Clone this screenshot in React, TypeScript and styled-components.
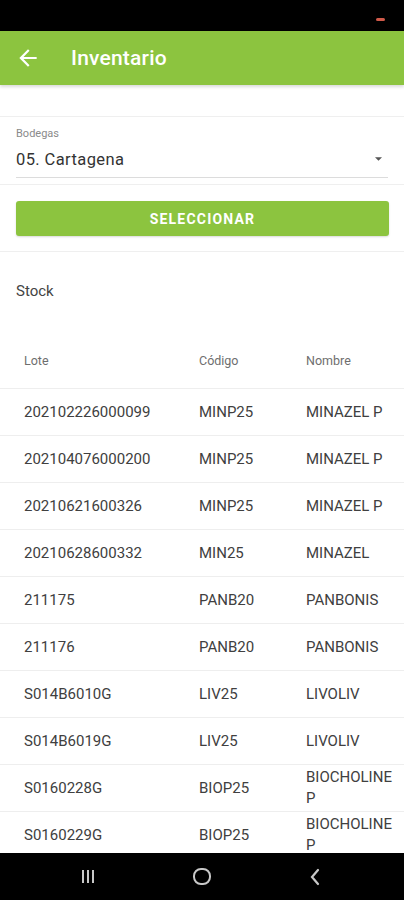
import { FC } from "react";
import styled, { createGlobalStyle } from "styled-components";

const GlobalStyle = createGlobalStyle`
    html, body {
        margin: 0;
        padding: 0;
        background: #000;
    }
    * {
        box-sizing: border-box;
    }
`;

const GREEN = "#8cc43f";

type Item = { lote: string; codigo: string; nombre: string };

const items: Item[] = [
    { lote: "202102226000099", codigo: "MINP25", nombre: "MINAZEL P" },
    { lote: "202104076000200", codigo: "MINP25", nombre: "MINAZEL P" },
    { lote: "20210621600326", codigo: "MINP25", nombre: "MINAZEL P" },
    { lote: "20210628600332", codigo: "MIN25", nombre: "MINAZEL" },
    { lote: "211175", codigo: "PANB20", nombre: "PANBONIS" },
    { lote: "211176", codigo: "PANB20", nombre: "PANBONIS" },
    { lote: "S014B6010G", codigo: "LIV25", nombre: "LIVOLIV" },
    { lote: "S014B6019G", codigo: "LIV25", nombre: "LIVOLIV" },
    { lote: "S0160228G", codigo: "BIOP25", nombre: "BIOCHOLINE P" },
    { lote: "S0160229G", codigo: "BIOP25", nombre: "BIOCHOLINE P" },
];

const BackArrow: FC = () => (
    <svg width={26} height={26} viewBox="0 0 24 24" fill="#fff">
        <path d="M20 11H7.83l5.59-5.59L12 4l-8 8 8 8 1.41-1.41L7.83 13H20v-2z" />
    </svg>
);

const Caret: FC = () => (
    <svg width={7} height={4} viewBox="0 0 10 5">
        <path d="M0 0h10L5 5z" fill="#555" />
    </svg>
);

export default function App() {
    return (
        <Root>
            <GlobalStyle />
            <StatusBar>
                <Battery />
            </StatusBar>
            <AppBar>
                <IconButton>
                    <BackArrow />
                </IconButton>
                <Title>Inventario</Title>
            </AppBar>
            <Content>
                <Divider $top={31} />
                <SelectField>
                    <SelectLabel>Bodegas</SelectLabel>
                    <SelectRow>
                        <SelectValue>05. Cartagena</SelectValue>
                        <Caret />
                    </SelectRow>
                </SelectField>
                <Divider $top={6} />
                <ButtonWrap>
                    <PrimaryButton>SELECCIONAR</PrimaryButton>
                </ButtonWrap>
                <Divider $top={0} />
                <SectionTitle>Stock</SectionTitle>
                <Table>
                    <HeaderRow>
                        <HeadCell>Lote</HeadCell>
                        <HeadCell>Código</HeadCell>
                        <HeadCell>Nombre</HeadCell>
                    </HeaderRow>
                    {items.map((it, i) => (
                        <Row key={i}>
                            <Cell>{it.lote}</Cell>
                            <Cell>{it.codigo}</Cell>
                            <Cell>{it.nombre}</Cell>
                        </Row>
                    ))}
                </Table>
            </Content>
            <NavBar>
                <NavRecents>
                    <span />
                    <span />
                    <span />
                </NavRecents>
                <NavHome />
                <svg width={12} height={18} viewBox="0 0 12 18">
                    <path d="M9 2L3 9l6 7" stroke="#c8c8c8" strokeWidth={2.2} fill="none" strokeLinecap="round" />
                </svg>
            </NavBar>
        </Root>
    );
}

const Root = styled.div`
    width: 404px;
    height: 900px;
    display: flex;
    flex-direction: column;
    overflow: hidden;
    font-family: Roboto, "Noto Sans", sans-serif;
    background: #fff;
`;

const StatusBar = styled.div`
    height: 31px;
    flex-shrink: 0;
    background: #000;
    position: relative;
`;

const Battery = styled.div`
    position: absolute;
    left: 376px;
    top: 18px;
    width: 9px;
    height: 3px;
    border-radius: 2px;
    background: #d05a4a;
`;

const AppBar = styled.div`
    height: 54px;
    flex-shrink: 0;
    background: ${GREEN};
    display: flex;
    align-items: center;
    padding-left: 15px;
    box-shadow: 0 2px 3px rgba(0, 0, 0, 0.15);
    position: relative;
    z-index: 1;
`;

const IconButton = styled.div`
    width: 26px;
    height: 26px;
    display: flex;
    align-items: center;
    justify-content: center;
`;

const Title = styled.div`
    margin-left: 30px;
    color: #fff;
    font-size: 21px;
    font-weight: 500;
    letter-spacing: 0.2px;
`;

const Content = styled.div`
    flex: 1;
    overflow: hidden;
    display: flex;
    flex-direction: column;
    background: #fff;
`;

const Divider = styled.div<{ $top: number }>`
    height: 1px;
    flex-shrink: 0;
    margin-top: ${(p) => p.$top}px;
    background: #efefef;
`;

const SelectField = styled.div`
    margin: 0 16px;
    padding-top: 10px;
    border-bottom: 1px solid #dcdcdc;
`;

const SelectLabel = styled.div`
    font-size: 11px;
    color: #8a8a8a;
    line-height: 14px;
`;

const SelectRow = styled.div`
    display: flex;
    align-items: center;
    justify-content: space-between;
    height: 36px;
    padding-right: 6px;
`;

const SelectValue = styled.div`
    font-size: 16.5px;
    color: #333;
    letter-spacing: 0.4px;
`;

const ButtonWrap = styled.div`
    padding: 16px 15px 15px 16px;
`;

const PrimaryButton = styled.div`
    height: 35px;
    border-radius: 3px;
    background: ${GREEN};
    color: #fff;
    font-size: 14px;
    font-weight: 700;
    letter-spacing: 1.2px;
    display: flex;
    align-items: center;
    justify-content: center;
    box-shadow: 0 1px 2px rgba(0, 0, 0, 0.15);
`;

const SectionTitle = styled.div`
    padding: 30px 16px 0;
    font-size: 15px;
    line-height: 18px;
    color: #444;
`;

const Table = styled.div`
    margin-top: 32px;
    display: flex;
    flex-direction: column;
`;

const HeaderRow = styled.div`
    display: grid;
    grid-template-columns: 175px 107px 90px;
    padding-left: 24px;
    height: 57px;
    align-items: center;
    border-bottom: 1px solid #eeeeee;
`;

const HeadCell = styled.div`
    font-size: 12.5px;
    color: #6e6e6e;
`;

const Row = styled.div`
    display: grid;
    grid-template-columns: 175px 107px 90px;
    padding-left: 24px;
    height: 47px;
    flex-shrink: 0;
    align-items: center;
    border-bottom: 1px solid #eeeeee;
`;

const Cell = styled.div`
    font-size: 15px;
    line-height: 21px;
    color: #404040;
`;

const NavBar = styled.div`
    height: 47px;
    flex-shrink: 0;
    background: #000;
    display: flex;
    align-items: center;
    justify-content: space-between;
    padding: 0 83px 0 82px;
`;

const NavRecents = styled.div`
    display: flex;
    gap: 3px;
    span {
        width: 2px;
        height: 13px;
        background: #c8c8c8;
    }
`;

const NavHome = styled.div`
    width: 18px;
    height: 17px;
    border: 2px solid #c8c8c8;
    border-radius: 8px;
`;
